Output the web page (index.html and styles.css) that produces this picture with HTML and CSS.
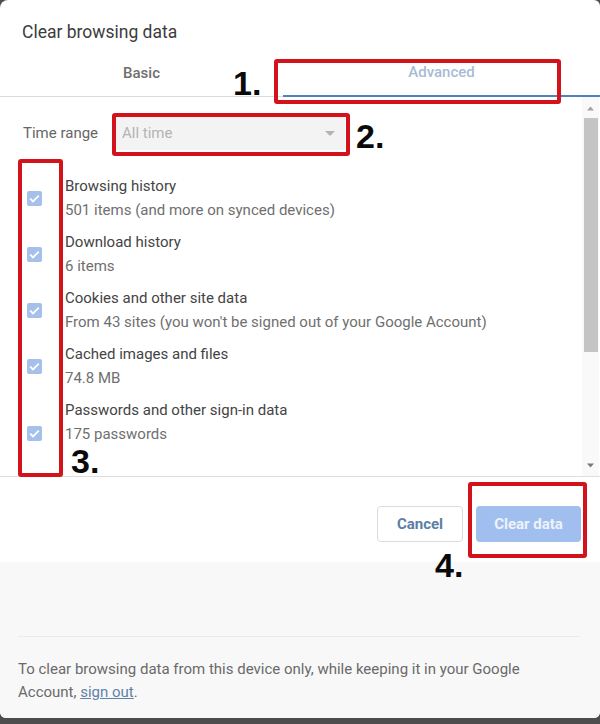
FILE: index.html
```html
<!DOCTYPE html>
<html>
<head>
<meta charset="utf-8">
<link rel="stylesheet" href="styles.css">
</head>
<body>
<div class="dialog">
  <h1 class="title">Clear browsing data</h1>
  <div class="tabs">
    <div class="tab tab-basic">Basic</div>
    <div class="tab tab-adv">Advanced</div>
  </div>
  <div class="scroll">
    <div class="content">
      <div class="range">
        <span class="range-label">Time range</span>
        <div class="select">
          <span>All time</span>
          <svg class="caret" width="10" height="6" viewBox="0 0 10 6"><path d="M0 0h10L5 5z" fill="#b4b4b4"/></svg>
        </div>
      </div>
      <ul class="items">
        <li class="item">
          <span class="cb"><svg width="15" height="15" viewBox="0 0 15 15"><path d="M3.2 7.6l2.8 2.8 5.8-5.8" fill="none" stroke="#fff" stroke-width="1.8"/></svg></span>
          <div class="item-text"><div class="item-title">Browsing history</div><div class="item-sub">501 items (and more on synced devices)</div></div>
        </li>
        <li class="item">
          <span class="cb"><svg width="15" height="15" viewBox="0 0 15 15"><path d="M3.2 7.6l2.8 2.8 5.8-5.8" fill="none" stroke="#fff" stroke-width="1.8"/></svg></span>
          <div class="item-text"><div class="item-title">Download history</div><div class="item-sub">6 items</div></div>
        </li>
        <li class="item">
          <span class="cb"><svg width="15" height="15" viewBox="0 0 15 15"><path d="M3.2 7.6l2.8 2.8 5.8-5.8" fill="none" stroke="#fff" stroke-width="1.8"/></svg></span>
          <div class="item-text"><div class="item-title">Cookies and other site data</div><div class="item-sub">From 43 sites (you won't be signed out of your Google Account)</div></div>
        </li>
        <li class="item">
          <span class="cb"><svg width="15" height="15" viewBox="0 0 15 15"><path d="M3.2 7.6l2.8 2.8 5.8-5.8" fill="none" stroke="#fff" stroke-width="1.8"/></svg></span>
          <div class="item-text"><div class="item-title">Cached images and files</div><div class="item-sub">74.8 MB</div></div>
        </li>
        <li class="item">
          <span class="cb cb-low"><svg width="15" height="15" viewBox="0 0 15 15"><path d="M3.2 7.6l2.8 2.8 5.8-5.8" fill="none" stroke="#fff" stroke-width="1.8"/></svg></span>
          <div class="item-text"><div class="item-title">Passwords and other sign-in data</div><div class="item-sub">175 passwords</div></div>
        </li>
      </ul>
    </div>
    <div class="scrollbar">
      <svg class="arrow" width="17" height="17" viewBox="0 0 17 17"><path d="M5 10.5h7L8.5 6.5z" fill="#a3a3a3"/></svg>
      <div class="thumb"></div>
      <div class="spacer"></div>
      <svg class="arrow" width="17" height="17" viewBox="0 0 17 17"><path d="M5 6.5h7L8.5 10.5z" fill="#7a7a7a"/></svg>
    </div>
  </div>
  <div class="actions">
    <button class="btn btn-cancel">Cancel</button>
    <button class="btn btn-clear">Clear data</button>
  </div>
  <div class="footer">
    <div class="footer-rule"></div>
    <p class="footer-text">To clear browsing data from this device only, while keeping it in your Google Account, <a class="link" href="#">sign out</a>.</p>
  </div>

  <div class="mark mark-1"></div>
  <div class="num num-1">1.</div>
  <div class="mark mark-2"></div>
  <div class="num num-2">2.</div>
  <div class="mark mark-3"></div>
  <div class="num num-3">3.</div>
  <div class="mark mark-4"></div>
  <div class="num num-4">4.</div>
</div>
</body>
</html>
```

FILE: styles.css
```css
* { box-sizing: border-box; }
html, body { margin: 0; padding: 0; }
body {
  background: #4d4d4d;
  width: 600px;
  height: 724px;
  overflow: hidden;
  font-family: Roboto, "Liberation Sans", Arial, sans-serif;
}
.dialog {
  position: relative;
  width: 600px;
  height: 718px;
  background: #fff;
  border-radius: 8px 6px 6px 6px;
  overflow: hidden;
  display: flex;
  flex-direction: column;
}
.title {
  margin: 0;
  padding: 21px 22px 0;
  font-size: 17.5px;
  line-height: 22px;
  font-weight: 400;
  color: #3c3c3c;
}
.tabs {
  display: flex;
  align-items: flex-end;
  margin-top: 7px;
}
.tab {
  text-align: center;
  font-size: 15px;
  font-weight: 500;
}
.tab-basic {
  width: 283px;
  height: 47px;
  line-height: 46px;
  color: #6e6e6e;
  border-bottom: 1px solid #dcdcdc;
}
.tab-adv {
  flex: 1;
  height: 47px;
  line-height: 44px;
  color: #a9bbd5;
  border-bottom: 2px solid #4f80c2;
}
.scroll {
  height: 380px;
  display: flex;
  border-bottom: 1px solid #dedede;
}
.content {
  flex: 1;
  padding: 19px 0 0 23px;
}
.range {
  display: flex;
  align-items: center;
  height: 34px;
}
.range-label {
  font-size: 15px;
  color: #666;
  width: 93px;
}
.select {
  width: 229px;
  height: 34px;
  background: #f3f3f3;
  display: flex;
  align-items: center;
  justify-content: space-between;
  padding: 0 10px 0 6px;
  font-size: 15px;
  color: #b3b3b3;
}
.caret { margin-top: 1px; }
.items {
  list-style: none;
  margin: 24px 0 0;
  padding: 0;
  display: flex;
  flex-direction: column;
  gap: 8px;
}
.item {
  display: flex;
  align-items: center;
  height: 48px;
}
.cb {
  width: 15px;
  height: 15px;
  margin-left: 4px;
  margin-right: 23px;
  background: #a5c0ea;
  border-radius: 2px;
  display: block;
  flex: none;
}
.cb svg { display: block; }
.cb-low {
  align-self: flex-end;
  margin-bottom: 5px;
}
.item-title, .item-sub {
  font-size: 15px;
  line-height: 24px;
  white-space: nowrap;
}
.item-title { color: #444; }
.item-sub { color: #6f6f6f; }
.scrollbar {
  width: 17px;
  margin-right: 1px;
  background: #f9f9f9;
  display: flex;
  flex-direction: column;
  align-items: center;
  padding: 3px 0 2px;
}
.arrow { display: block; flex: none; }
.thumb {
  width: 14px;
  height: 234px;
  background: #c4c4c4;
  margin-top: 1px;
}
.spacer { flex: 1; }
.actions {
  display: flex;
  justify-content: flex-end;
  gap: 13px;
  padding: 29px 19px 20px 0;
  background: #fff;
}
.btn {
  height: 36px;
  border-radius: 4px;
  font-family: Roboto, "Liberation Sans", Arial, sans-serif;
  font-size: 15px;
  font-weight: 700;
  padding: 0;
}
.btn-cancel {
  width: 86px;
  background: #fff;
  border: 1px solid #dcdcdc;
  color: #5c7ea5;
}
.btn-clear {
  width: 105px;
  background: #a0bfee;
  border: none;
  color: #eef3fb;
}
.footer {
  flex: 1;
  background: #f8f8f8;
  padding: 74px 18px 0;
}
.footer-rule {
  height: 1px;
  background: #ebebeb;
  margin-right: 2px;
}
.footer-text {
  margin: 21px 0 0;
  font-size: 15px;
  line-height: 23px;
  color: #6a6a6a;
  width: 530px;
}
.link {
  color: #5f82a6;
  text-decoration: underline;
}
.mark {
  position: absolute;
  border: 4px solid #d3131c;
  border-radius: 3px;
}
.mark-1 { left: 274px; top: 59px; width: 287px; height: 45px; }
.mark-2 { left: 112px; top: 113px; width: 238px; height: 43px; }
.mark-3 { left: 18px; top: 159px; width: 45px; height: 318px; }
.mark-4 { left: 468px; top: 482px; width: 119px; height: 76px; }
.num {
  position: absolute;
  font-family: "Liberation Sans", Arial, sans-serif;
  font-size: 34px;
  font-weight: 700;
  line-height: 34px;
  color: #0a0a0a;
}
.num-1 { left: 233px; top: 66px; }
.num-2 { left: 356px; top: 119px; }
.num-3 { left: 71px; top: 444px; }
.num-4 { left: 435px; top: 548px; }
```
